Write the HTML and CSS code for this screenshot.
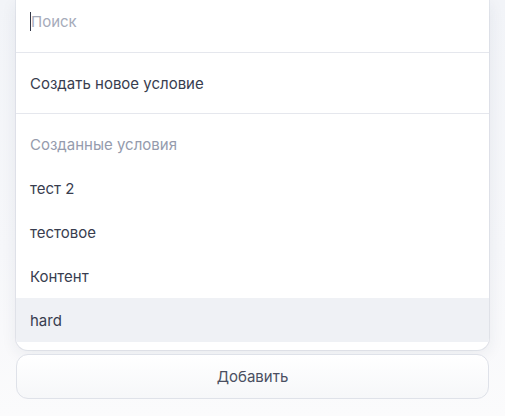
FILE: index.html
```html
<!DOCTYPE html>
<html lang="ru">
<head>
<meta charset="utf-8">
<link rel="stylesheet" href="styles.css">
</head>
<body>
<div class="page">
  <div class="dropdown">
    <div class="search"><span class="caret"></span><span class="placeholder">Поиск</span></div>
    <div class="create">Создать новое условие</div>
    <div class="list">
      <div class="header">Созданные условия</div>
      <div class="item">тест 2</div>
      <div class="item">тестовое</div>
      <div class="item">Контент</div>
      <div class="item active">hard</div>
    </div>
  </div>
  <div class="button">Добавить</div>
</div>
</body>
</html>
```
FILE: styles.css
```css
html, body {
  margin: 0;
  padding: 0;
}
body {
  width: 505px;
  height: 416px;
  overflow: hidden;
  background: linear-gradient(180deg, #f2f4f8 0%, #f6f7fa 60%, #fbfbfc 100%);
  font-family: Inter, "Noto Sans", sans-serif;
  font-size: 15px;
  color: #383d4f;
}
.page {
  padding: 0 16px;
  display: flex;
  flex-direction: column;
  gap: 4px;
}
.dropdown {
  background: #fff;
  border-radius: 0 0 12px 12px;
  box-shadow: 0 4px 16px rgba(40, 50, 80, 0.08), 0 0 0 1px rgba(220, 224, 232, 0.6);
  overflow: hidden;
}
.search {
  height: 42px;
  padding-bottom: 10px;
  border-bottom: 1px solid #e5e7ed;
  display: flex;
  align-items: center;
  padding-left: 14px;
}
.caret {
  width: 1px;
  height: 19px;
  background: #333849;
}
.placeholder {
  color: #a6abba;
}
.create {
  height: 60px;
  border-bottom: 1px solid #e5e7ed;
  display: flex;
  align-items: center;
  padding-left: 14px;
}
.list {
  padding: 8px 0;
}
.header, .item {
  height: 44px;
  display: flex;
  align-items: center;
  padding-left: 14px;
}
.header {
  color: #959bad;
}
.item.active {
  background: #eff1f5;
}
.button {
  height: 43px;
  border: 1px solid #dfe2e9;
  border-radius: 12px;
  background: linear-gradient(180deg, #ffffff 0%, #f6f7f9 100%);
  display: flex;
  align-items: center;
  justify-content: center;
  color: #4a4f61;
}
```
